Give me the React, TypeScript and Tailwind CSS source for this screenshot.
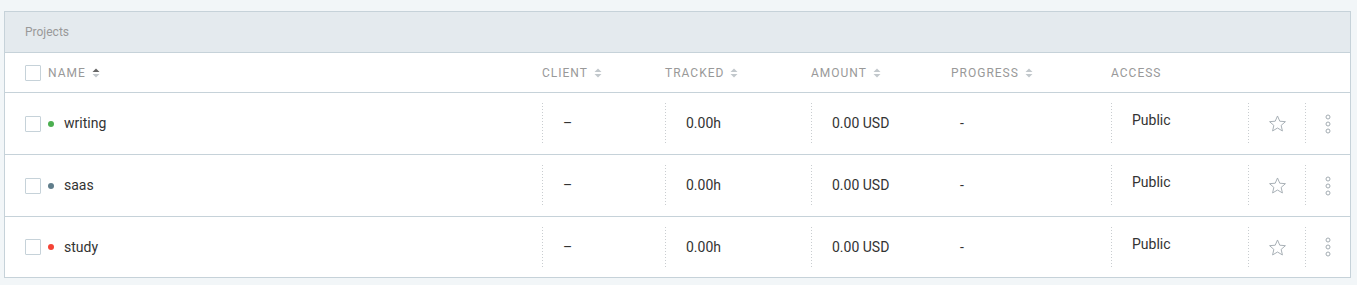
import React from "react";

const projects = [
  { name: "writing", color: "bg-[#4caf50]" },
  { name: "saas", color: "bg-[#607d8b]" },
  { name: "study", color: "bg-[#f44336]" },
];

const cols = "grid grid-cols-[537px_123px_146px_140px_160px_137px_57px_45px]";

function SortIcon({ active = false }: { active?: boolean }) {
  return (
    <svg width="8" height="10" viewBox="0 0 8 10" className="ml-[6px]">
      <path d="M4 0.5 L7.5 4 H0.5 Z" fill={active ? "#666" : "#c2c8cc"} />
      <path d="M4 9.5 L7.5 6 H0.5 Z" fill="#c2c8cc" />
    </svg>
  );
}

function Checkbox() {
  return <span className="block h-4 w-4 shrink-0 rounded-[1px] border border-[#c6d2d9] bg-white" />;
}

function Divider() {
  return (
    <span className="absolute left-0 top-[10px] bottom-[10px] w-px bg-[repeating-linear-gradient(to_bottom,#c9cdd0_0_1px,transparent_1px_3px)]" />
  );
}

export default function App() {
  return (
    <div className="min-h-[285px] bg-[#f2f6f8] pt-[11px] pl-[4px] font-['Roboto',sans-serif]">
      <div className="w-[1347px] border border-[#c6d2d9] bg-white">
        {/* Title bar */}
        <div className="flex h-[41px] items-center border-b border-[#c6d2d9] bg-[#e4eaee] px-5 text-xs text-[#999]">
          Projects
        </div>

        {/* Column headers */}
        <div className={`${cols} h-[40px] items-center border-b border-[#c6d2d9] text-xs uppercase tracking-[1px] text-[#999]`}>
          <div className="flex items-center pl-5">
            <Checkbox />
            <span className="ml-[7px]">Name</span>
            <SortIcon active />
          </div>
          <div className="flex items-center">
            Client
            <SortIcon />
          </div>
          <div className="flex items-center">
            Tracked
            <SortIcon />
          </div>
          <div className="flex items-center">
            Amount
            <SortIcon />
          </div>
          <div className="flex items-center">
            Progress
            <SortIcon />
          </div>
          <div>Access</div>
          <div />
          <div />
        </div>

        {/* Rows */}
        {projects.map((p, i) => (
          <div
            key={p.name}
            className={`${cols} items-stretch text-sm text-[#333] ${i < projects.length - 1 ? "h-[62px] border-b border-[#c6d2d9]" : "h-[60px]"}`}
          >
            <div className="flex items-center pl-5">
              <Checkbox />
              <span className={`ml-[7px] h-[6px] w-[6px] rounded-full ${p.color}`} />
              <span className="ml-[10px] pb-px">{p.name}</span>
            </div>
            <div className="relative flex items-center pl-[21px] pb-px">
              <Divider />
              –
            </div>
            <div className="relative flex items-center pl-[21px] pb-px">
              <Divider />
              0.00h
            </div>
            <div className="relative flex items-center pl-[21px] pb-px">
              <Divider />
              0.00 USD
            </div>
            <div className="flex items-center pl-[9px] pb-px">-</div>
            <div className="relative flex items-center pl-[21px] pb-[7px]">
              <Divider />
              Public
            </div>
            <div className="relative flex items-center justify-center pl-[1px]">
              <Divider />
              <svg width="19" height="19" viewBox="0 0 24 24" fill="none" stroke="#a3acb2" strokeWidth="1.2" strokeLinejoin="round">
                <path d="M12 2.5l2.9 6.6 7.1.6-5.4 4.7 1.6 7-6.2-3.7-6.2 3.7 1.6-7L2 9.7l7.1-.6z" />
              </svg>
            </div>
            <div className="relative flex items-center justify-center">
              <Divider />
              <svg width="6" height="20" viewBox="0 0 6 20" fill="none" stroke="#a3acb2" strokeWidth="1">
                <circle cx="3" cy="3" r="2" />
                <circle cx="3" cy="10" r="2" />
                <circle cx="3" cy="17" r="2" />
              </svg>
            </div>
          </div>
        ))}
      </div>
    </div>
  );
}
